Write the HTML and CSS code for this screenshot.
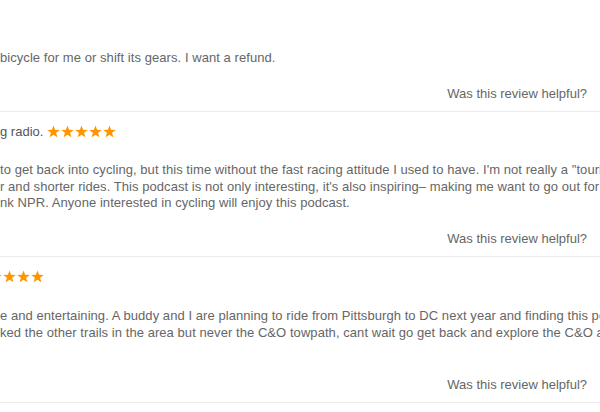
FILE: index.html
```
<!DOCTYPE html>
<html>
<head>
<meta charset="utf-8">
<link rel="stylesheet" href="styles.css">
</head>
<body>
<div class="reviews">
  <div class="review">
    <div class="title"></div>
    <div class="body">
      <div class="line">bicycle for me or shift its gears. I want a refund.</div>
    </div>
    <div class="helpful">Was this review helpful?</div>
  </div>
  <div class="review">
    <div class="title">
      <span class="title-text">g radio.</span>
      <svg class="stars" width="69" height="13" viewBox="0 0 69 13">
        <g fill="#ff9500">
          <polygon points="6.5,0.4 8.09,4.82 12.78,4.96 9.07,7.83 10.38,12.34 6.5,9.7 2.62,12.34 3.93,7.83 0.22,4.96 4.91,4.82"/>
          <polygon transform="translate(14 0)" points="6.5,0.4 8.09,4.82 12.78,4.96 9.07,7.83 10.38,12.34 6.5,9.7 2.62,12.34 3.93,7.83 0.22,4.96 4.91,4.82"/>
          <polygon transform="translate(28 0)" points="6.5,0.4 8.09,4.82 12.78,4.96 9.07,7.83 10.38,12.34 6.5,9.7 2.62,12.34 3.93,7.83 0.22,4.96 4.91,4.82"/>
          <polygon transform="translate(42 0)" points="6.5,0.4 8.09,4.82 12.78,4.96 9.07,7.83 10.38,12.34 6.5,9.7 2.62,12.34 3.93,7.83 0.22,4.96 4.91,4.82"/>
          <polygon transform="translate(56 0)" points="6.5,0.4 8.09,4.82 12.78,4.96 9.07,7.83 10.38,12.34 6.5,9.7 2.62,12.34 3.93,7.83 0.22,4.96 4.91,4.82"/>
        </g>
      </svg>
    </div>
    <div class="body">
      <div class="line">to get back into cycling, but this time without the fast racing attitude I used to have. I'm not really a "touring" cyclist,</div>
      <div class="line">r and shorter rides. This podcast is not only interesting, it's also inspiring– making me want to go out for a ride.</div>
      <div class="line">nk NPR. Anyone interested in cycling will enjoy this podcast.</div>
    </div>
    <div class="helpful">Was this review helpful?</div>
  </div>
  <div class="review">
    <div class="title">
      <svg class="stars stars-cut" width="69" height="13" viewBox="0 0 69 13">
        <g fill="#ff9500">
          <polygon points="6.5,0.4 8.09,4.82 12.78,4.96 9.07,7.83 10.38,12.34 6.5,9.7 2.62,12.34 3.93,7.83 0.22,4.96 4.91,4.82"/>
          <polygon transform="translate(14 0)" points="6.5,0.4 8.09,4.82 12.78,4.96 9.07,7.83 10.38,12.34 6.5,9.7 2.62,12.34 3.93,7.83 0.22,4.96 4.91,4.82"/>
          <polygon transform="translate(28 0)" points="6.5,0.4 8.09,4.82 12.78,4.96 9.07,7.83 10.38,12.34 6.5,9.7 2.62,12.34 3.93,7.83 0.22,4.96 4.91,4.82"/>
          <polygon transform="translate(42 0)" points="6.5,0.4 8.09,4.82 12.78,4.96 9.07,7.83 10.38,12.34 6.5,9.7 2.62,12.34 3.93,7.83 0.22,4.96 4.91,4.82"/>
          <polygon transform="translate(56 0)" points="6.5,0.4 8.09,4.82 12.78,4.96 9.07,7.83 10.38,12.34 6.5,9.7 2.62,12.34 3.93,7.83 0.22,4.96 4.91,4.82"/>
        </g>
      </svg>
    </div>
    <div class="body body-3">
      <div class="line">e and entertaining. A buddy and I are planning to ride from Pittsburgh to DC next year and finding this podcast</div>
      <div class="line">ked the other trails in the area but never the C&amp;O towpath, cant wait go get back and explore the C&amp;O again.</div>
      <div class="line"></div>
    </div>
    <div class="helpful">Was this review helpful?</div>
  </div>
</div>
</body>
</html>
```

FILE: styles.css
```
html, body {
  margin: 0;
  padding: 0;
  background: #ffffff;
  overflow: hidden;
}

body {
  font-family: "Liberation Sans", Arial, Helvetica, sans-serif;
  font-size: 13px;
  color: #666666;
}

.reviews {
  margin-top: -1px;
  border-bottom: 1px solid #ebebeb;
}

.review {
  border-top: 1px solid #ebebeb;
  padding: 10px 0 9.5px;
}

.title {
  height: 18px;
  display: flex;
  align-items: center;
  gap: 4px;
  color: #555555;
  white-space: nowrap;
}

.stars {
  flex: none;
  display: block;
}

.stars-cut {
  margin-left: -25px;
}

.body {
  margin-top: 22px;
  line-height: 16.5px;
  letter-spacing: 0.06px;
}

.body-3 {
  padding-top: 1px;
}

.line {
  height: 16.5px;
  white-space: nowrap;
}

.helpful {
  margin-top: 18px;
  line-height: 17px;
  text-align: right;
  padding-right: 13px;
}
```
